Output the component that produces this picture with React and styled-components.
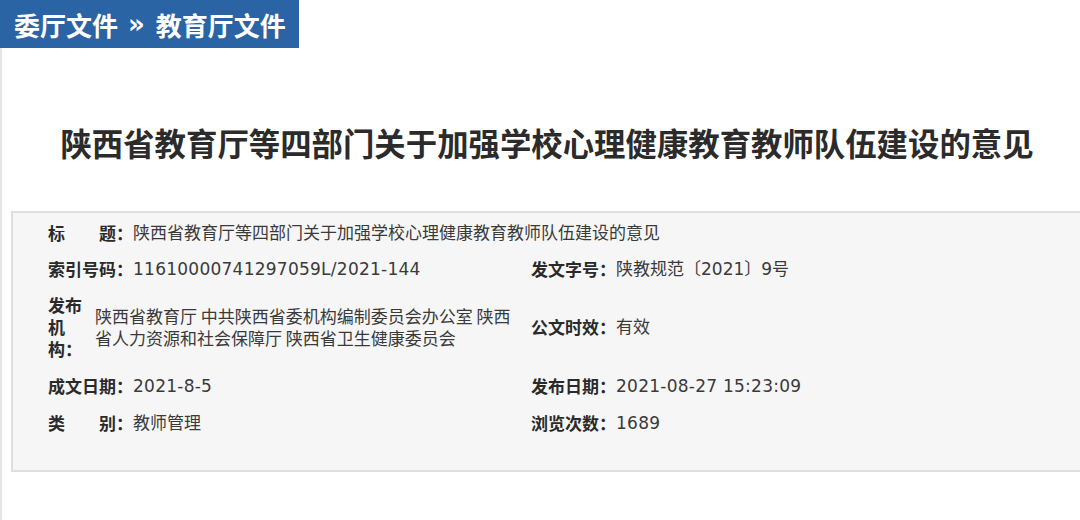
import React from 'react'
import styled, { createGlobalStyle } from 'styled-components'

const GlobalStyle = createGlobalStyle`
body{
margin:0;
background:#fff;
overflow:hidden;
font-family:"DejaVu Sans","Noto Sans CJK SC",sans-serif;
}
`

const Page = styled.div`
width:1080px;
height:520px;
display:flex;
flex-direction:column;
`

const Crumb = styled.div`
width:299px;
height:48px;
background:#2a64a5;
color:#fff;
font-family:"Noto Sans CJK SC",sans-serif;
font-weight:700;
font-size:26px;
display:flex;
align-items:center;
padding-left:14px;
box-sizing:border-box;
white-space:nowrap;
`

const Sep = styled.span`
margin:0 11px 0 10px;
font-size:26px;
font-family:"DejaVu Sans",sans-serif;
`

const Content = styled.div`
flex:1;
border-left:2px solid #e6e6e6;
padding-left:9px;
`

const Title = styled.h1`
margin:75px 0 0 0;
padding-left:3px;
text-align:center;
font-family:"Noto Sans CJK SC",sans-serif;
font-size:31.4px;
line-height:40px;
font-weight:700;
color:#2b2b2b;
white-space:nowrap;
`

const InfoBox = styled.div`
margin-top:48px;
width:1100px;
background:#f6f6f6;
border:2px solid #dedede;
padding:3px 0 29px 35px;
display:grid;
grid-template-columns:483px 1fr;
font-size:17px;
line-height:22px;
color:#3a3a3a;
`

const Cell = styled.div`
display:flex;
align-items:center;
min-height:${p => (p.short ? '34px' : '37px')};
padding:${p => (p.tall ? '7px 0' : '0')};
grid-column:${p => (p.wide ? '1 / 3' : 'auto')};
`

const Label = styled.span`
font-family:"Noto Sans CJK SC",sans-serif;
font-weight:700;
color:#2a2a2a;
white-space:nowrap;
flex:none;
`

const NarrowLabel = styled(Label)`
width:34px;
white-space:normal;
margin-right:13px;
`

const Value = styled.span`
font-weight:400;
white-space:nowrap;
letter-spacing:${p => (p.latin ? '0.25px' : '0')};
`

const WrapValue = styled(Value)`
white-space:normal;
font-family:"Noto Sans CJK SC",sans-serif;
width:428px;
`

const Item = ({ label, children, wide, short, latin }) => (
  <Cell wide={wide} short={short}>
    <Label>{label}</Label>
    <Value latin={latin}>{children}</Value>
  </Cell>
)

const App = () => {
  return (
    <Page>
      <GlobalStyle />
      <Crumb>
        委厅文件<Sep>»</Sep>教育厅文件
      </Crumb>
      <Content>
        <Title>陕西省教育厅等四部门关于加强学校心理健康教育教师队伍建设的意见</Title>
        <InfoBox>
          <Item wide short label={'标\u2003\u2003题：'}>陕西省教育厅等四部门关于加强学校心理健康教育教师队伍建设的意见</Item>
          <Item latin label="索引号码：">11610000741297059L/2021-144</Item>
          <Item label="发文字号：">陕教规范〔2021〕9号</Item>
          <Cell tall>
            <NarrowLabel>发布机构：</NarrowLabel>
            <WrapValue>陕西省教育厅 中共陕西省委机构编制委员会办公室 陕西省人力资源和社会保障厅 陕西省卫生健康委员会</WrapValue>
          </Cell>
          <Item label="公文时效：">有效</Item>
          <Item latin label="成文日期：">2021-8-5</Item>
          <Item latin label="发布日期：">2021-08-27 15:23:09</Item>
          <Item label={'类\u2003\u2003别：'}>教师管理</Item>
          <Item latin label="浏览次数：">1689</Item>
        </InfoBox>
      </Content>
    </Page>
  )
}

export default App
